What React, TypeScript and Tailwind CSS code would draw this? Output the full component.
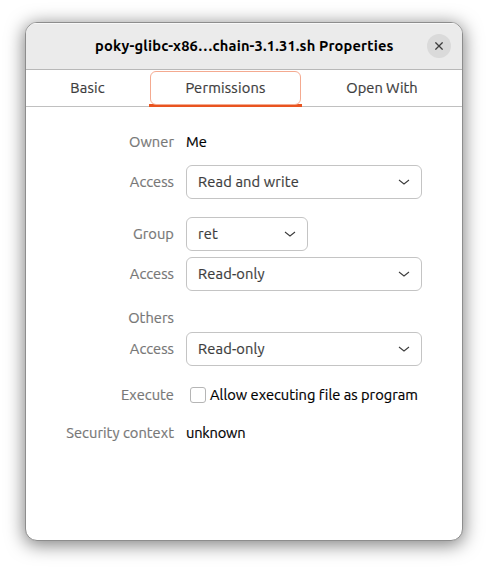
import type { ReactNode } from "react";

function Chevron() {
  return (
    <svg width="12" height="8" viewBox="0 0 12 8" fill="none" stroke="#3d3d3d" strokeWidth="1.1">
      <path d="M1 2 L6 6 L11 2" />
    </svg>
  );
}

function Select({ value, narrow = false }: { value: string; narrow?: boolean }) {
  return (
    <button
      className={`flex h-[34px] items-center justify-between rounded-md border border-[#c4c4c4] bg-white pr-[11px] pl-[11px] text-[#3d3d3d] ${narrow ? "w-[122px]" : "w-[236px]"}`}
    >
      <span className="tracking-[0.15px] [-webkit-text-stroke:0.2px_currentColor]">{value}</span>
      <Chevron />
    </button>
  );
}

function Row({ label, className, children }: { label: string; className: string; children?: ReactNode }) {
  return (
    <div className={`flex items-center gap-3 ${className}`}>
      <div className="w-[148px] shrink-0 text-right tracking-[0.05px] text-[#777777] [-webkit-text-stroke:0.2px_currentColor]">{label}</div>
      {children}
    </div>
  );
}

export default function App() {
  return (
    <div className="h-[569px] w-[488px] overflow-hidden bg-white pt-[22px] pl-[25px] font-['Ubuntu','Noto_Sans',sans-serif] text-[14.667px] leading-5 whitespace-nowrap">
      <div className="h-[519px] w-[438px] overflow-hidden rounded-[12px] border border-[#8d8d8d] bg-white shadow-[0_3px_18px_1px_rgba(0,0,0,0.5)]">
        <header className="flex h-[47px] items-center border-b border-[#b8b8b8] bg-[#ebebeb] pr-[11px] pl-[69px] shadow-[inset_0_1px_0_#f8f8f8]">
          <h1 className="w-[332px] font-bold tracking-[0.16px] text-black">poky-glibc-x86…chain-3.1.31.sh Properties</h1>
          <button className="flex size-6 items-center justify-center rounded-full bg-[#dadada]" aria-label="Close">
            <svg width="8" height="8" viewBox="0 0 8 8" fill="none" stroke="#3d3d3d" strokeWidth="1.3">
              <path d="M0.4 0.4 L7.6 7.6 M7.6 0.4 L0.4 7.6" />
            </svg>
          </button>
        </header>
        <nav className="flex h-[37px] border-b border-[#c0c0c0] tracking-[0.2px] text-[#3d3d3d] [-webkit-text-stroke:0.2px_currentColor]">
          <div className="flex w-[123px] items-center justify-center">Basic</div>
          <div className="h-[37px] w-[153px] border-b-[3px] border-[#e95420] px-px pt-px">
            <div className="flex h-[34px] items-center justify-center rounded-md border border-[#f4aa90] pb-px">Permissions</div>
          </div>
          <div className="flex w-[160px] items-center justify-center tracking-normal">Open With</div>
        </nav>
        <main className="pt-[25px]">
          <Row label="Owner" className="h-5">
            <span className="text-black [-webkit-text-stroke:0.2px_currentColor]">Me</span>
          </Row>
          <Row label="Access" className="mt-[13px] h-[34px]">
            <Select value="Read and write" />
          </Row>
          <Row label="Group" className="mt-[18px] h-[34px]">
            <Select value="ret" narrow />
          </Row>
          <Row label="Access" className="mt-[6px] h-[34px]">
            <Select value="Read-only" />
          </Row>
          <Row label="Others" className="mt-[17px] h-5" />
          <Row label="Access" className="mt-[4px] h-[34px]">
            <Select value="Read-only" />
          </Row>
          <Row label="Execute" className="mt-[19px] h-5">
            <label className="flex items-center gap-1 pl-1 text-black">
              <span className="size-4 rounded-[3px] border border-[#b5b5b5] bg-white" />
              <span className="tracking-[0.01px] [-webkit-text-stroke:0.2px_currentColor]">Allow executing file as program</span>
            </label>
          </Row>
          <Row label="Security context" className="mt-[18px] h-5">
            <span className="tracking-[-0.2px] text-black [-webkit-text-stroke:0.2px_currentColor]">unknown</span>
          </Row>
        </main>
      </div>
    </div>
  );
}
